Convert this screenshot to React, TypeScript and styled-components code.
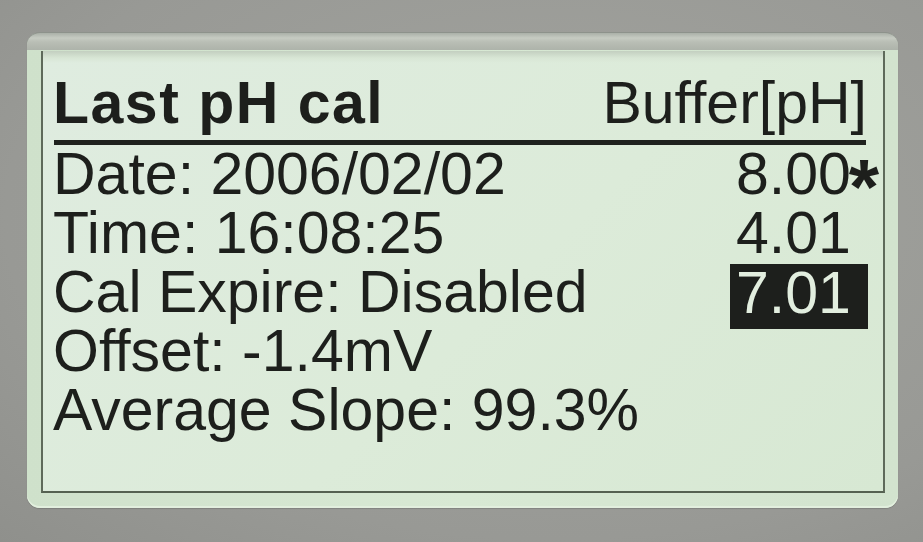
import React from "react";
import styled, { createGlobalStyle } from "styled-components";

const Global = createGlobalStyle`
  html, body { margin: 0; padding: 0; }
  body {
    background: #999a96;
    width: 923px;
    height: 542px;
    overflow: hidden;
    font-family: "Liberation Sans", Arial, sans-serif;
  }
`;

const Page = styled.div`
  width: 923px;
  height: 542px;
  box-sizing: border-box;
  padding: 32px 0 0 27px;
  background: radial-gradient(ellipse at 60% 40%, #a3a49f 0%, #989995 70%, #8f908c 100%);
`;

const Bezel = styled.div`
  width: 871px;
  height: 476px;
  box-sizing: border-box;
  padding: 18px 13px 15px 14px;
  border-radius: 13px;
  border-top: 1px solid #8d928b;
  background:
    linear-gradient(
      to bottom,
      #aab0a8 0px,
      #c6cbc2 5px,
      #b9beb5 9px,
      #adb3aa 17px,
      rgba(0, 0, 0, 0) 17px
    ),
    linear-gradient(to right, #cfe1cb 0%, #d8e9d4 50%, #d2e3ce 100%);
  box-shadow: inset 0 -2px 0 #e2efde, 0 1px 1px rgba(0, 0, 0, 0.15);
`;

const Screen = styled.div`
  width: 100%;
  height: 100%;
  box-sizing: border-box;
  border-left: 2px solid #5e6a5a;
  border-right: 2px solid #5e6a5a;
  border-bottom: 2px solid #556151;
  padding: 23px 15px 0 10px;
  background:
    linear-gradient(to bottom, #c3cfc0 0px, #d8e6d5 7px, rgba(0, 0, 0, 0) 12px),
    linear-gradient(135deg, #dfece0 0%, #dcebd9 55%, #d7e8d3 100%);
  color: #1d1f1c;
  display: flex;
  flex-direction: column;
`;

const HeaderRow = styled.div`
  display: flex;
  justify-content: space-between;
  align-items: flex-start;
  height: 58px;
  margin-bottom: 8px;
`;

const Title = styled.span`
  display: inline-block;
  height: 58px;
  font-family: "Liberation Sans", Arial, sans-serif;
  font-weight: 700;
  font-size: 59px;
  line-height: 58px;
  letter-spacing: 1.5px;
  white-space: nowrap;
`;

const ColumnHead = styled.span`
  display: inline-block;
  height: 58px;
  font-family: "Liberation Sans", Arial, sans-serif;
  font-size: 59px;
  line-height: 58px;
  white-space: nowrap;
  margin-right: 1px;
`;

const Rule = styled.div`
  height: 5px;
  background: #1f221e;
  margin-left: 1px;
  margin-right: 2px;
`;

const Rows = styled.div`
  display: flex;
  flex-direction: column;
`;

const Row = styled.div`
  display: flex;
  justify-content: space-between;
  align-items: flex-start;
  height: 59px;
`;

const Label = styled.span`
  display: inline-block;
  height: 59px;
  font-size: 59px;
  line-height: 59px;
  white-space: nowrap;
`;

const Value = styled.span<{ $selected?: boolean }>`
  display: inline-block;
  box-sizing: border-box;
  width: 138px;
  height: ${(p) => (p.$selected ? "65px" : "59px")};
  margin-top: ${(p) => (p.$selected ? "1px" : "0")};
  padding-left: 6px;
  font-size: 59px;
  line-height: 59px;
  white-space: nowrap;
  background: ${(p) => (p.$selected ? "#1d1f1c" : "transparent")};
  color: ${(p) => (p.$selected ? "#e2eedf" : "inherit")};
`;

const Star = styled.span`
  font-size: 78px;
  font-weight: 700;
  line-height: 0;
  vertical-align: -20px;
  margin-left: -2px;
`;

type Line = { label: string; value?: string; starred?: boolean; selected?: boolean };

const lines: Line[] = [
  { label: "Date: 2006/02/02", value: "8.00", starred: true },
  { label: "Time: 16:08:25", value: "4.01" },
  { label: "Cal Expire: Disabled", value: "7.01", selected: true },
  { label: "Offset: -1.4mV" },
  { label: "Average Slope: 99.3%" },
];

export default function App() {
  return (
    <>
      <Global />
      <Page>
        <Bezel>
          <Screen>
            <HeaderRow>
              <Title>Last pH cal</Title>
              <ColumnHead>Buffer[pH]</ColumnHead>
            </HeaderRow>
            <Rule />
            <Rows>
              {lines.map((l) => (
                <Row key={l.label}>
                  <Label>{l.label}</Label>
                  {l.value !== undefined && (
                    <Value $selected={l.selected}>
                      {l.value}
                      {l.starred && <Star>*</Star>}
                    </Value>
                  )}
                </Row>
              ))}
            </Rows>
          </Screen>
        </Bezel>
      </Page>
    </>
  );
}
